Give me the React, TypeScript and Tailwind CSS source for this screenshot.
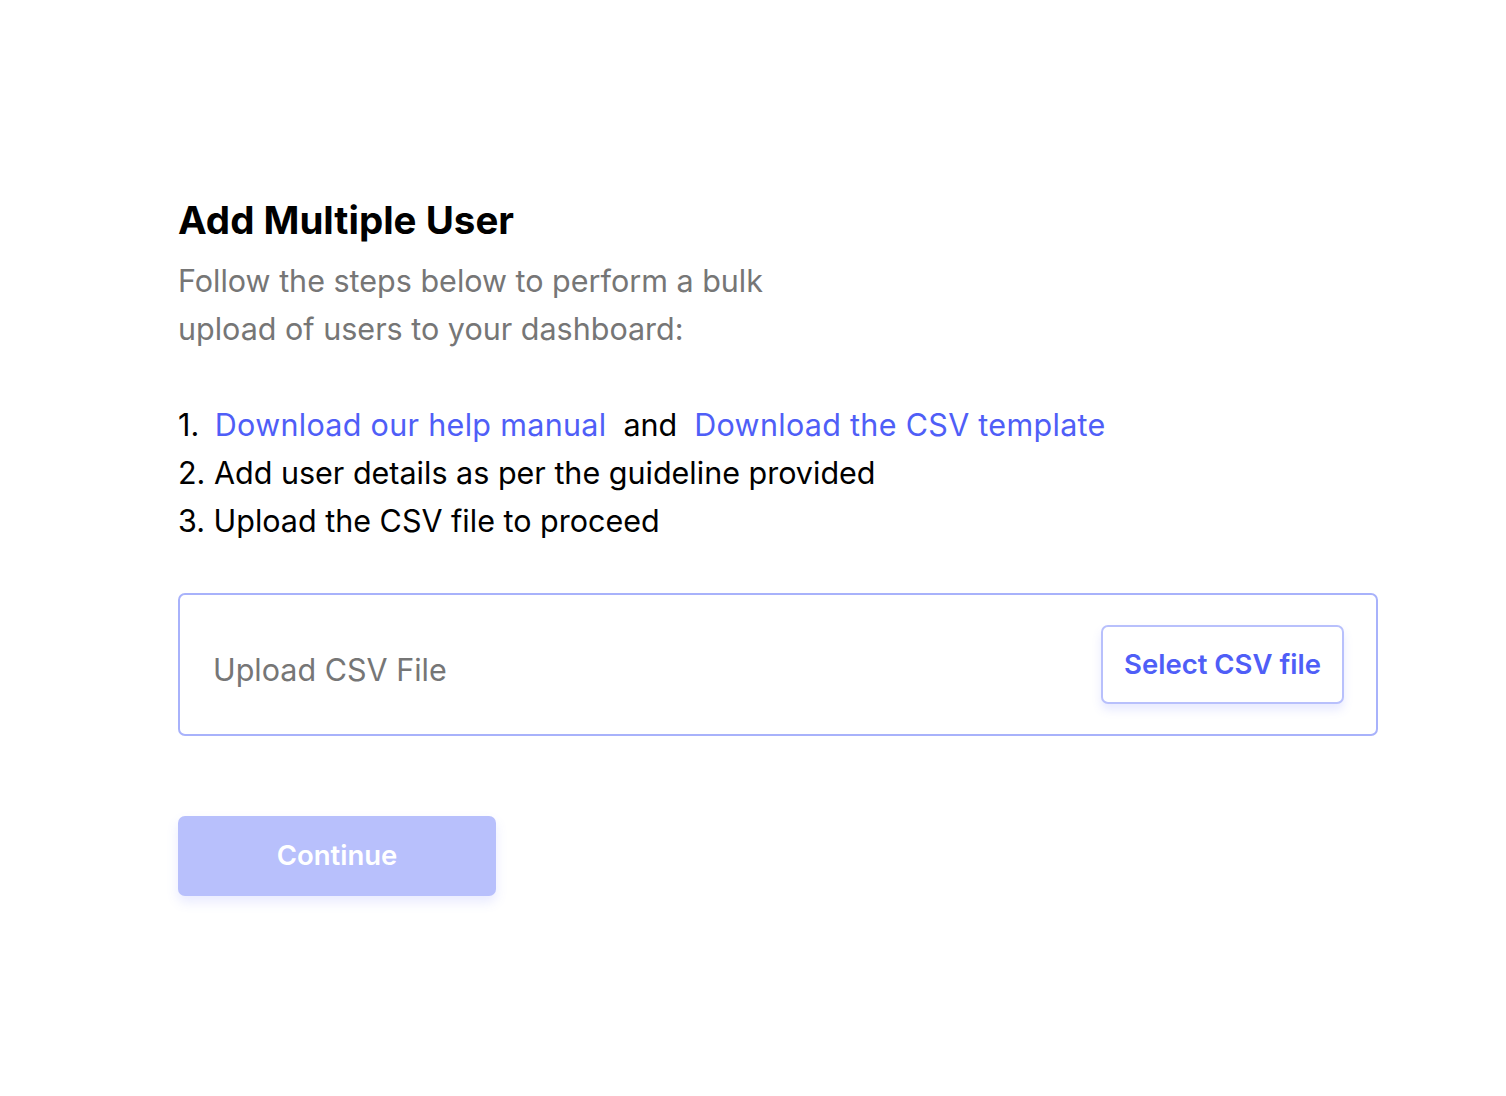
import React from 'react';

export default function App() {
    return (
        <div className="min-h-screen bg-white font-['Inter',sans-serif] text-black">
            <div className="pl-[178px] pt-[194px]">
                <div className="w-[1200px]">
                    {/* Header */}
                    <h1 className="text-[38.5px] leading-[52px] font-bold">Add Multiple User</h1>
                    <p className="mt-[11px] w-[640px] text-[30.5px] leading-[48px] text-[#767676]">
                        Follow the steps below to perform a bulk upload of users to your dashboard:
                    </p>

                    {/* Steps */}
                    <ol className="mt-[48px] text-[30.5px] leading-[48px]">
                        <li>
                            1.{' '}
                            <a href="#" className="ml-[7px] text-[#4f5ef7] tracking-[0.01em]">Download our help manual</a>
                            <span className="mx-[17px]">and</span>
                            <a href="#" className="text-[#4f5ef7] tracking-[0.01em]">Download the CSV template</a>
                        </li>
                        <li>2. Add user details as per the guideline provided</li>
                        <li>3. Upload the CSV file to proceed</li>
                    </ol>

                    {/* Upload box */}
                    <div className="mt-[48px] h-[143px] border-2 border-[#a8b2fb] rounded-[7px] flex items-center justify-between pl-[33px] pr-[32px]">
                        <span className="pt-[10px] text-[30.5px] text-[#767676]">Upload CSV File</span>
                        <button className="w-[243px] h-[79px] border-2 border-[#b8c0fc] rounded-[7px] bg-white shadow-[0_6px_10px_rgba(99,115,255,0.15)] text-[27.5px] font-semibold text-[#4f5ef7]">
                            Select CSV file
                        </button>
                    </div>

                    {/* Continue */}
                    <button className="mt-[80px] w-[318px] h-[80px] rounded-[7px] bg-[#b8c0fc] shadow-[0_6px_12px_rgba(99,115,255,0.15)] text-white text-[27.5px] font-semibold">
                        Continue
                    </button>
                </div>
            </div>
        </div>
    );
}
